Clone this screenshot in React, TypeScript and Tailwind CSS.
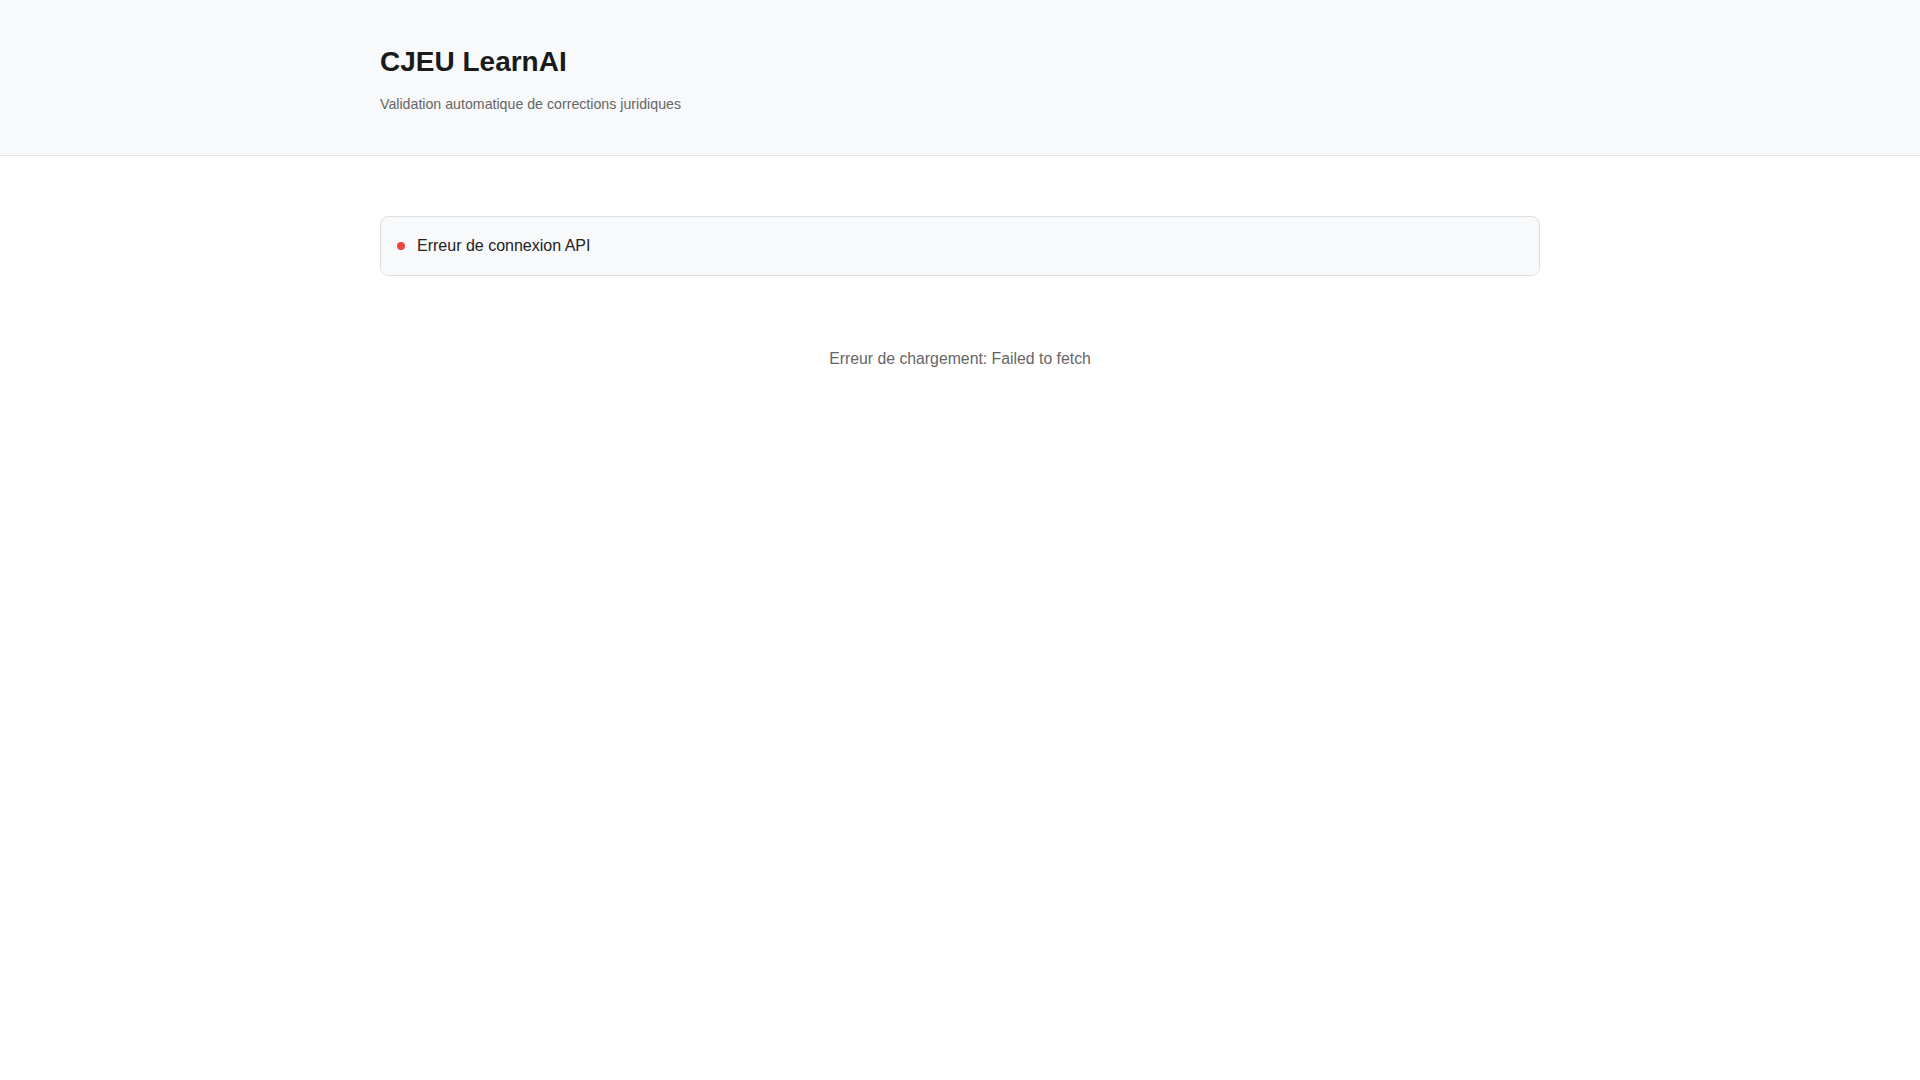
export default function App() {
  return (
    <div className="min-h-screen bg-white font-['Liberation_Sans',Arial,sans-serif]">
      <header className="border-b border-[#e2e3e5] bg-[#f8f9fa]">
        <div className="mx-auto max-w-[1160px] pt-[46px] pb-[41px]">
          <h1 className="text-[28px] leading-[32px] font-bold text-[#1a1a1a]">CJEU LearnAI</h1>
          <p className="mt-[16px] text-[14.2px] leading-[20px] text-[#666]">
            Validation automatique de corrections juridiques
          </p>
        </div>
      </header>

      <main className="mx-auto max-w-[1160px] pt-[60px]">
        <div className="flex items-center gap-3 rounded-lg border border-[#dfe0e2] bg-[#f8f9fa] px-4 py-[17px]">
          <span className="size-2 rounded-full bg-[#ef4444]" />
          <span className="text-[16px] leading-6 text-[#222]">Erreur de connexion API</span>
        </div>

        <p className="mt-[71px] text-center text-[15.8px] leading-6 text-[#666]">
          Erreur de chargement: Failed to fetch
        </p>
      </main>
    </div>
  )
}
